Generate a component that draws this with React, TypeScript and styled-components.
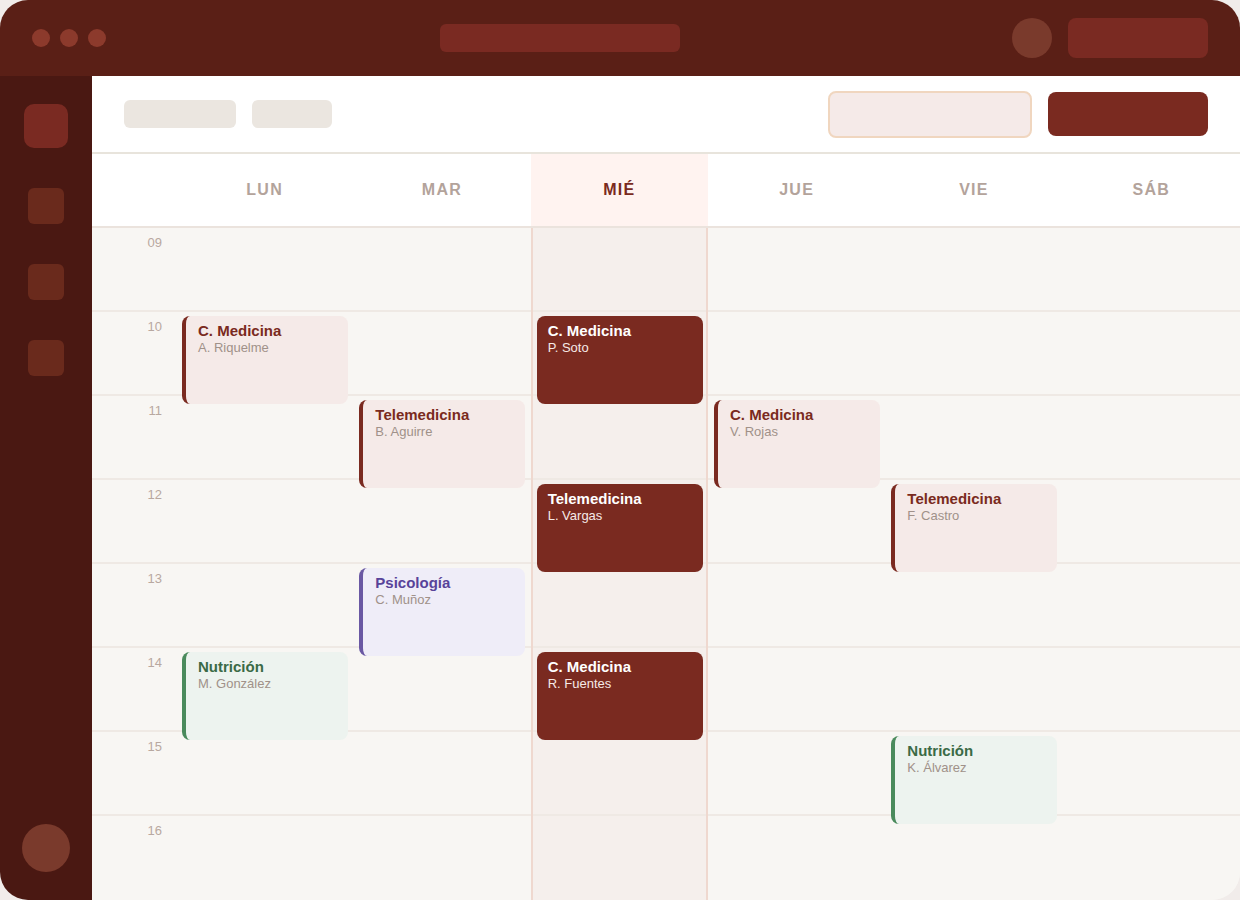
import { FC } from "react";
import styled, { createGlobalStyle, css } from "styled-components";

type Tone = "primary" | "solid" | "purple" | "green";

interface Appointment {
  day: number;
  hour: number;
  title: string;
  person: string;
  tone: Tone;
}

const DAYS = ["LUN", "MAR", "MIÉ", "JUE", "VIE", "SÁB"];
const HOURS = ["09", "10", "11", "12", "13", "14", "15", "16"];
const TODAY = 2;
const ROW = 84;

const appointments: Appointment[] = [
  { day: 0, hour: 10, title: "C. Medicina", person: "A. Riquelme", tone: "primary" },
  { day: 0, hour: 14, title: "Nutrición", person: "M. González", tone: "green" },
  { day: 1, hour: 11, title: "Telemedicina", person: "B. Aguirre", tone: "primary" },
  { day: 1, hour: 13, title: "Psicología", person: "C. Muñoz", tone: "purple" },
  { day: 2, hour: 10, title: "C. Medicina", person: "P. Soto", tone: "solid" },
  { day: 2, hour: 12, title: "Telemedicina", person: "L. Vargas", tone: "solid" },
  { day: 2, hour: 14, title: "C. Medicina", person: "R. Fuentes", tone: "solid" },
  { day: 3, hour: 11, title: "C. Medicina", person: "V. Rojas", tone: "primary" },
  { day: 4, hour: 12, title: "Telemedicina", person: "F. Castro", tone: "primary" },
  { day: 4, hour: 15, title: "Nutrición", person: "K. Álvarez", tone: "green" },
];

const tones = {
  primary: { bg: "#f5eae8", bar: "#7a2a20", title: "#7a2a20", text: "#a09189" },
  purple: { bg: "#efedf8", bar: "#6a58a3", title: "#58439a", text: "#a09189" },
  green: { bg: "#edf3ef", bar: "#4a8a5c", title: "#3a6a46", text: "#a09189" },
  solid: { bg: "#7a2a20", bar: "#7a2a20", title: "#ffffff", text: "#f6e9e6" },
};

const GlobalStyle = createGlobalStyle`
  * { box-sizing: border-box; }
  html, body { margin: 0; padding: 0; }
  body {
    background: #f1ecea;
    font-family: "Liberation Sans", Arial, sans-serif;
  }
`;

const App: FC = () => {
  return (
    <>
      <GlobalStyle />
      <Frame>
        <TitleBar>
          <Dots>
            <Dot />
            <Dot />
            <Dot />
          </Dots>
          <AddressPill />
          <TitleActions>
            <UserCircle />
            <TitleButton />
          </TitleActions>
        </TitleBar>

        <Body>
          <Sidebar>
            <NavItem $active />
            <NavItem />
            <NavItem />
            <NavItem />
            <SideAvatar />
          </Sidebar>

          <Main>
            <Toolbar>
              <Chip $w={112} />
              <Chip $w={80} />
              <Spacer />
              <SearchBox />
              <PrimaryButton />
            </Toolbar>

            <Calendar>
              <HeaderRow>
                <HeaderCorner />
                {DAYS.map((d, i) => (
                  <DayHead key={d} $today={i === TODAY}>
                    {d}
                  </DayHead>
                ))}
              </HeaderRow>

              <Grid>
                <TimeColumn>
                  {HOURS.map((h) => (
                    <HourCell key={h}>
                      <HourLabel>{h}</HourLabel>
                    </HourCell>
                  ))}
                </TimeColumn>
                {DAYS.map((d, i) => (
                  <DayColumn key={d} $today={i === TODAY}>
                    {HOURS.map((h) => (
                      <SlotLine key={h} />
                    ))}
                    {appointments
                      .filter((a) => a.day === i)
                      .map((a) => (
                        <EventCard
                          key={a.hour}
                          $tone={a.tone}
                          style={{ top: (a.hour - 9) * ROW + 4 }}
                        >
                          <EventTitle $tone={a.tone}>{a.title}</EventTitle>
                          <EventPerson $tone={a.tone}>{a.person}</EventPerson>
                        </EventCard>
                      ))}
                  </DayColumn>
                ))}
              </Grid>
            </Calendar>
          </Main>
        </Body>
      </Frame>
    </>
  );
};

const Frame = styled.div`
  width: 1240px;
  height: 900px;
  border-radius: 28px;
  overflow: hidden;
  display: flex;
  flex-direction: column;
  background: #f8f6f3;
`;

const TitleBar = styled.div`
  height: 76px;
  flex-shrink: 0;
  background: #5a1f16;
  display: flex;
  align-items: center;
  padding: 0 32px;
`;

const Dots = styled.div`
  display: flex;
  gap: 10px;
`;

const Dot = styled.span`
  width: 18px;
  height: 18px;
  border-radius: 50%;
  background: #8c3a2c;
`;

const AddressPill = styled.div`
  width: 240px;
  height: 28px;
  border-radius: 6px;
  background: #7a2a22;
  margin-left: 334px;
`;

const TitleActions = styled.div`
  margin-left: auto;
  display: flex;
  align-items: center;
  gap: 16px;
`;

const UserCircle = styled.span`
  width: 40px;
  height: 40px;
  border-radius: 50%;
  background: #7a3a2c;
`;

const TitleButton = styled.span`
  width: 140px;
  height: 40px;
  border-radius: 8px;
  background: #7a2a22;
`;

const Body = styled.div`
  flex: 1;
  display: flex;
  min-height: 0;
`;

const Sidebar = styled.div`
  width: 92px;
  flex-shrink: 0;
  background: #4a1812;
  display: flex;
  flex-direction: column;
  align-items: center;
  padding: 28px 0;
  gap: 40px;
`;

const NavItem = styled.span<{ $active?: boolean }>`
  width: 36px;
  height: 36px;
  border-radius: 6px;
  background: #6a2a1c;

  ${(p) =>
    p.$active &&
    css`
      width: 44px;
      height: 44px;
      border-radius: 10px;
      background: #7a2a22;
    `}
`;

const SideAvatar = styled.span`
  margin-top: auto;
  width: 48px;
  height: 48px;
  border-radius: 50%;
  background: #7a3a2c;
`;

const Main = styled.div`
  flex: 1;
  display: flex;
  flex-direction: column;
  min-width: 0;
`;

const Toolbar = styled.div`
  height: 78px;
  flex-shrink: 0;
  background: #ffffff;
  border-bottom: 2px solid #e8e4dc;
  display: flex;
  align-items: center;
  padding: 0 32px;
  gap: 16px;
`;

const Chip = styled.span<{ $w: number }>`
  width: ${(p) => p.$w}px;
  height: 28px;
  border-radius: 6px;
  background: #ebe6e0;
`;

const Spacer = styled.div`
  flex: 1;
`;

const SearchBox = styled.div`
  width: 204px;
  height: 47px;
  border-radius: 8px;
  background: #f5eae8;
  border: 2px solid #f0d6bf;
`;

const PrimaryButton = styled.div`
  width: 160px;
  height: 44px;
  border-radius: 8px;
  background: #7a2a20;
`;

const Calendar = styled.div`
  flex: 1;
  display: flex;
  flex-direction: column;
  min-height: 0;
`;

const HeaderRow = styled.div`
  height: 74px;
  flex-shrink: 0;
  display: grid;
  grid-template-columns: 84px repeat(6, 1fr);
  background: #ffffff;
  border-bottom: 2px solid #ebe3dd;
`;

const HeaderCorner = styled.div``;

const DayHead = styled.div<{ $today?: boolean }>`
  display: flex;
  align-items: center;
  justify-content: center;
  font-size: 16px;
  font-weight: 700;
  letter-spacing: 1.3px;
  color: ${(p) => (p.$today ? "#7a2a20" : "#b3a39b")};
  background: ${(p) => (p.$today ? "#fff3f0" : "transparent")};
`;

const Grid = styled.div`
  flex: 1;
  display: grid;
  grid-template-columns: 84px repeat(6, 1fr);
  background: #f8f6f3;
  overflow: hidden;
`;

const TimeColumn = styled.div`
  display: flex;
  flex-direction: column;
`;

const HourCell = styled.div`
  height: ${ROW}px;
  flex-shrink: 0;
  border-bottom: 2px solid #efe9e4;
  display: flex;
  justify-content: flex-end;
  padding: 8px 14px 0 0;

  &:last-child {
    border-bottom: none;
  }
`;

const HourLabel = styled.span`
  font-size: 13px;
  line-height: 14px;
  color: #b8a8a0;
`;

const DayColumn = styled.div<{ $today?: boolean }>`
  position: relative;
  display: flex;
  flex-direction: column;

  ${(p) =>
    p.$today &&
    css`
      background: #f5efec;
      border-left: 2px solid #efd8cf;
      border-right: 2px solid #efd8cf;
    `}
`;

const SlotLine = styled.div`
  height: ${ROW}px;
  flex-shrink: 0;
  border-bottom: 2px solid #efe9e4;

  &:nth-child(${HOURS.length}) {
    border-bottom: none;
  }
`;

const EventCard = styled.div<{ $tone: Tone }>`
  position: absolute;
  left: 6px;
  width: 166px;
  height: 88px;
  border-radius: 8px;
  background: ${(p) => tones[p.$tone].bg};
  padding: 6px 12px 0 12px;
  border-left: 4px solid ${(p) => tones[p.$tone].bar};

  ${(p) =>
    p.$tone === "solid" &&
    css`
      left: 4px;
      border-left: none;
      padding-left: 11px;
    `}
`;

const EventTitle = styled.div<{ $tone: Tone }>`
  font-size: 15px;
  font-weight: 700;
  line-height: 18px;
  color: ${(p) => tones[p.$tone].title};
`;

const EventPerson = styled.div<{ $tone: Tone }>`
  font-size: 13px;
  line-height: 16px;
  color: ${(p) => tones[p.$tone].text};
`;

export default App;
